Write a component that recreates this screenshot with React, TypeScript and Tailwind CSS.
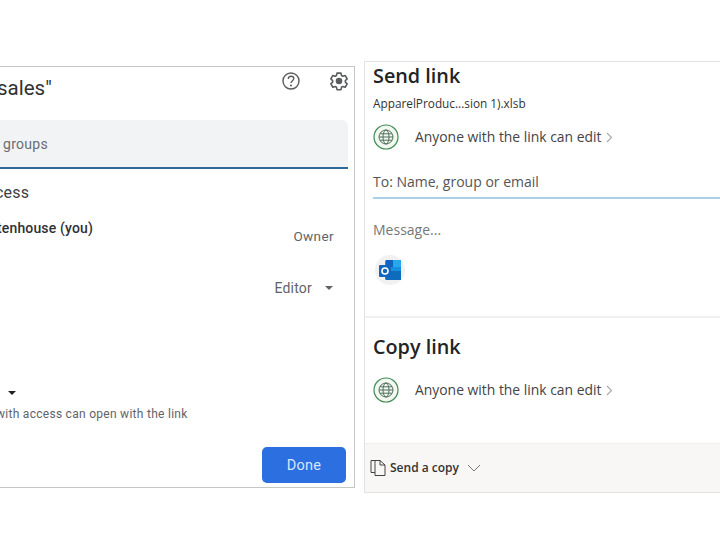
import React from "react";

function Globe() {
  return (
    <svg width="26" height="26" viewBox="0 0 26 26" fill="none" className="shrink-0">
      <circle cx="13" cy="13" r="12" fill="#f3f8f3" stroke="#3f8a4f" strokeWidth="1.2" />
      <g stroke="#4f6f58" strokeWidth="1">
        <circle cx="13" cy="13" r="7" />
        <ellipse cx="13" cy="13" rx="3" ry="7" />
        <path d="M6 13h14M7 9.8h12M7 16.2h12" />
      </g>
    </svg>
  );
}

function Caret({ color }: { color: string }) {
  return (
    <svg width="8" height="4" viewBox="0 0 10 5" className="shrink-0">
      <path d="M0 0h10L5 5z" fill={color} />
    </svg>
  );
}

function Gear() {
  return (
    <svg width="20" height="20" viewBox="0 0 24 24" fill="none" stroke="#5a5c5e" strokeWidth="1.9" strokeLinejoin="round">
      <path d="M9.6 2.5h4.8l.6 2.9 1.6.9 2.8-.9 2.4 4.1-2.2 2 0 1.9 2.2 2-2.4 4.1-2.8-.9-1.6.9-.6 2.9H9.600l-.6-2.900-1.600-.9-2.800.9-2.400-4.100 2.200-2 0-1.900-2.200-2 2.400-4.100 2.800.9 1.600-.9z" />
      <circle cx="12" cy="12" r="3" fill="#5a5c5e" />
    </svg>
  );
}

function Help() {
  return (
    <svg width="20" height="20" viewBox="0 0 20 20" fill="none" stroke="#5a5c5e">
      <circle cx="10" cy="10" r="8" strokeWidth="1.400" />
      <path d="M7.300 8c0-1.700 1.200-2.800 2.800-2.800s2.700 1 2.700 2.400c0 2-2.800 2.200-2.800 4.500" strokeWidth="1.400" />
      <circle cx="10" cy="14.500" r="1" fill="#5a5c5e" stroke="none" />
    </svg>
  );
}

function Outlook() {
  return (
    <div className="w-[30px] h-[30px] rounded-full bg-[#f1f1f1] flex items-center justify-center">
      <svg width="24" height="22" viewBox="0 0 24 22">
        <rect x="7" y="1" width="16" height="20" rx="1.500" fill="#1490df" />
        <rect x="8" y="1" width="7" height="7" fill="#0a64c0" />
        <rect x="15" y="1" width="8" height="7" fill="#28a8ea" />
        <rect x="8" y="12" width="15" height="9" fill="#0f6cbd" />
        <rect x="1" y="6" width="12" height="12" rx="1" fill="#1466bd" />
        <circle cx="7" cy="12" r="3" fill="none" stroke="#fff" strokeWidth="1.600" />
      </svg>
    </div>
  );
}

function LinkRow() {
  return (
    <div className="flex items-center h-[26px] text-[13.900px] text-[#444]">
      <Globe />
      <span className="ml-[16px]">Anyone with the link can edit</span>
      <svg width="7" height="11" viewBox="0 0 7 11" fill="none" stroke="#aaa" strokeWidth="1.200" className="ml-[5px]">
        <path d="M1 1l4.500 4.500L1 10" />
      </svg>
    </div>
  );
}

export default function App() {
  return (
    <div className="w-[720px] h-[555px] bg-white overflow-hidden flex items-start">
      <div
        className="w-[355px] h-[422px] mt-[66px] shrink-0 border border-l-0 border-[#c6c6c6] flex flex-col overflow-hidden text-[#3c4043]"
        style={{ fontFamily: "Roboto, sans-serif" }}
      >
        <div className="flex h-[53px] pr-[5px] shrink-0">
          <div className="flex-1 text-[20.500px] leading-[26px] mt-[8px] ml-[-3px] text-[#303134]">sales"</div>
          <div className="flex gap-[28px] mt-[4px] h-[20px]">
            <Help />
            <Gear />
          </div>
        </div>
        <div className="w-[348px] h-[49px] shrink-0 bg-[#f1f3f4] border-b-2 border-[#2f6a9b] rounded-tr-md flex items-center pl-[3px] pt-[2px] text-[14px] tracking-[0.3px] text-[#6a6d70]">
          groups
        </div>
        <div className="text-[16px] leading-[20px] mt-[14px] ml-[-5px] text-[#3c4043] tracking-[0.2px]">cess</div>
        <div className="flex justify-between pr-[20px] mt-[16px]">
          <div className="text-[14px] leading-[18px] font-medium text-[#303134] ml-[-3px] tracking-[0.15px]">tenhouse (you)</div>
          <div className="text-[13.500px] leading-[16px] mt-[9px] tracking-[0.4px] text-[#5f6368]">Owner</div>
        </div>
        <div className="flex justify-end items-center gap-[13px] pr-[21px] mt-[34px] h-[20px] text-[14px] tracking-[0.2px] text-[#5f6368]">
          <span>Editor</span>
          <Caret color="#5f6368" />
        </div>
        <div className="ml-[8px] mt-[93px] h-[5px] flex">
          <Caret color="#202124" />
        </div>
        <div className="text-[12px] leading-[16px] mt-[10px] ml-[-4px] tracking-[0.28px] text-[#5f6368]">with access can open with the link</div>
        <div className="flex justify-end pr-[8px] mt-[25px]">
          <div className="w-[84px] h-[36px] pt-[1px] bg-[#2b6fe0] rounded-[5px] flex items-center justify-center text-[14.500px] tracking-[0.3px] text-[#d5e6ff]">
            Done
          </div>
        </div>
      </div>

      <div
        className="ml-[9px] w-[400px] shrink-0 h-[432px] mt-[61px] border-l border-t border-b border-[#e2e2e2] flex flex-col text-[#242424]"
        style={{ fontFamily: "'Open Sans', sans-serif" }}
      >
        <div className="pl-[8px] h-[254px] shrink-0 flex flex-col">
          <div className="text-[19.800px] leading-[28px] font-semibold">Send link</div>
          <div className="text-[11.800px] leading-[16px] mt-[5px] text-[#333]">ApparelProduc...sion 1).xlsb</div>
          <div className="mt-[13px]">
            <LinkRow />
          </div>
          <div className="mt-[20px] h-[29px] border-b-2 border-[#a9d0e8] text-[14px] leading-[24px] text-[#555]">To: Name, group or email</div>
          <div className="mt-[21px] text-[14px] leading-[20px] text-[#777]">Message...</div>
          <div className="mt-[15px] ml-[2px]">
            <Outlook />
          </div>
        </div>
        <div className="h-[127px] shrink-0 border-t-2 border-[#f0f0f0] pl-[8px] flex flex-col">
          <div className="text-[19.800px] leading-[28px] font-semibold mt-[15px]">Copy link</div>
          <div className="mt-[16px]">
            <LinkRow />
          </div>
        </div>
        <div className="flex-1 bg-[#f9f7f5] border-t border-[#eeeeee] flex items-center pl-[5px]">
          <svg width="16" height="18" viewBox="0 0 16 18" fill="none" stroke="#444" strokeWidth="1">
            <path d="M5 4.500V1.500h5l5 4.500v10.500H5zM10 1.500V6h5" />
            <path d="M5 13.500H1V1.500h5" />
          </svg>
          <span className="ml-[4px] text-[12px] font-semibold text-[#333]">Send a copy</span>
          <svg width="14" height="8" viewBox="0 0 14 8" fill="none" stroke="#777" className="ml-[8px]">
            <path d="M1 1l6 6 6-6" />
          </svg>
        </div>
      </div>
    </div>
  );
}
